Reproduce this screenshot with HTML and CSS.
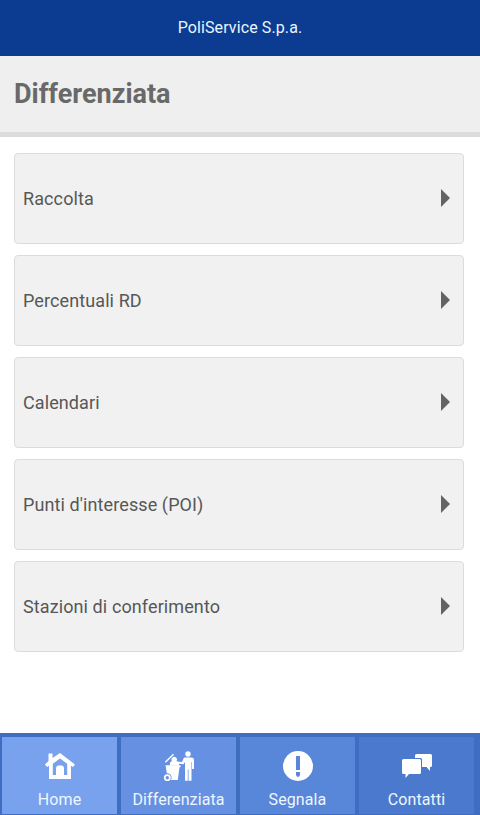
FILE: index.html
```html
<!DOCTYPE html>
<html lang="it">
<head>
    <meta charset="UTF-8">
    <meta name="viewport" content="width=device-width, initial-scale=1.0">
    <title>PoliService S.p.a.</title>
    <link rel="stylesheet" href="styles.css">
</head>
<body>
    <header>PoliService S.p.a.</header>

    <h1>Differenziata</h1>

    <!-- Menu -->
    <main class="menu">
        <a class="menu-item"><span>Raccolta</span><i class="arrow"></i></a>
        <a class="menu-item"><span>Percentuali RD</span><i class="arrow"></i></a>
        <a class="menu-item"><span>Calendari</span><i class="arrow"></i></a>
        <a class="menu-item"><span>Punti d'interesse (POI)</span><i class="arrow"></i></a>
        <a class="menu-item"><span>Stazioni di conferimento</span><i class="arrow"></i></a>
    </main>

    <!-- Barra in basso -->
    <nav>
        <a class="tab home">
            <svg viewBox="0 0 31 30">
                <path d="M4.500 10V2.500H8.500V7L16 2l15 11.500-2 2.500-2-1.300V28H5V14.700L3 16l-2-2.500z"/>
                <path class="hole" d="M8.800 24V12.800L16 7.500l7.200 5.300V24H20v-6.500c0-2-1-3-2.500-3h-3c-1.500 0-2.500 1-2.500 3V24z"/>
            </svg>
            <span>Home</span>
        </a>
        <a class="tab differenziata">
            <svg viewBox="0 0 31 30">
                <path class="lid" d="M2.300 11.300L10.500 3.300"/>
                <path d="M7 14.500V11.500L9 10a2.700 2.700 0 1 1 4.500 0l2.500 2v2.500z"/>
                <path d="M2.500 14.300h15v2h-1L14.800 29H8L4 23z"/>
                <circle cx="4.300" cy="26.500" r="4.300" class="hole"/>
                <circle cx="4.300" cy="26.700" r="2.600" class="wheel"/>
                <circle cx="25" cy="3" r="2.700"/>
                <path d="M14 10.500l5 .5 1.500-3.500c.3-.7.800-1 1.500-1h6.500c1.500 0 2.500 1 2.500 2.500V18h-2v-7h-.5v18.700h-3V18.500h-.7v11.200H22V11l-1.500 2.200L14 12.500z"/>
            </svg>
            <span>Differenziata</span>
        </a>
        <a class="tab segnala">
            <svg viewBox="0 0 31 30">
                <circle cx="16" cy="15" r="15"/>
                <path class="hole" d="M14 5h4v14h-4zM14 21h4v3l-1 1.700h-2L14 24z"/>
            </svg>
            <span>Segnala</span>
        </a>
        <a class="tab contatti">
            <svg viewBox="0 0 31 30">
                <path d="M15.500 3h14a1.500 1.500 0 0 1 1.500 1.500v10a1.500 1.500 0 0 1-1.500 1.500H29v4l-3.500-4H21V8.500a1.500 1.500 0 0 0-1.500-1.500H14V4.500A1.500 1.500 0 0 1 15.500 3z"/>
                <path d="M2.500 8h16A1.500 1.500 0 0 1 20 9.500v12a1.500 1.500 0 0 1-1.500 1.500H8l-3.500 4v-4h-2A1.500 1.500 0 0 1 1 21.500v-12A1.500 1.500 0 0 1 2.500 8z"/>
            </svg>
            <span>Contatti</span>
        </a>
    </nav>
</body>
</html>
```

FILE: styles.css
```css
* {
    box-sizing: border-box;
}
body {
    font-family: Roboto, "Liberation Sans", sans-serif;
    margin: 0;
    height: 815px;
    display: flex;
    flex-direction: column;
    background-color: #fff;
    overflow: hidden;
}
header {
    height: 56px;
    line-height: 55px;
    text-align: center;
    font-size: 16px;
    letter-spacing: 0.1px;
    background-color: #0c3c91;
    color: #e9f6ff;
}
h1 {
    height: 81px;
    margin: 0;
    padding-left: 14px;
    line-height: 76px;
    font-size: 27px;
    color: #696969;
    background-color: #efefef;
    border-bottom: 5px solid #dcdcdc;
}

/* Menu */
.menu {
    flex: 1;
    display: flex;
    flex-direction: column;
    gap: 11px;
    padding: 16px 16px 0 14px;
}
.menu-item {
    display: flex;
    align-items: center;
    justify-content: space-between;
    height: 91px;
    padding: 0 13px 0 8px;
    font-size: 18px;
    letter-spacing: 0.1px;
    color: #575757;
    background-color: #f1f1f1;
    border: 1px solid #dcdcdc;
    border-radius: 4px;
}
.arrow {
    margin-bottom: 1px;
    border-left: 9px solid #636363;
    border-top: 9px solid transparent;
    border-bottom: 9px solid transparent;
}

/* Barra in basso */
nav {
    display: flex;
    gap: 4px;
    height: 82px;
    padding: 4px 6px 1px 2px;
    background-color: #3f6dc0;
}
.tab {
    flex: 1;
    display: flex;
    flex-direction: column;
    align-items: center;
    padding-top: 14px;
    font-size: 16px;
    line-height: 20px;
    letter-spacing: 0.1px;
    color: #eef7ff;
}
.tab span {
    margin-top: 9px;
}
.tab svg {
    width: 31px;
    height: 30px;
    fill: #fff;
}
.home { background-color: #78a1ee; }
.differenziata { background-color: #6691e2; }
.segnala { background-color: #5886d8; }
.contatti { background-color: #4a79ce; }

.home .hole { fill: #78a1ee; }
.differenziata .hole { fill: #6691e2; }
.segnala .hole { fill: #5886d8; }
.lid {
    stroke: #fff;
    stroke-width: 1.4;
}
.tab .wheel {
    fill: none;
    stroke: #fff;
    stroke-width: 1.8;
}
```
